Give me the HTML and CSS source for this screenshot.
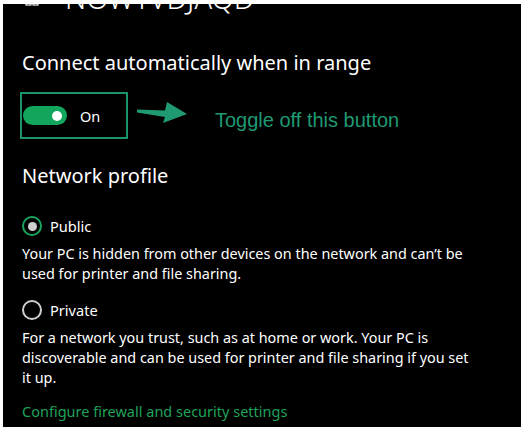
FILE: index.html
```html
<!DOCTYPE html>
<html>
<head>
<meta charset="utf-8">
<link rel="stylesheet" href="styles.css">
</head>
<body>
<div class="panel">
  <div class="header">
    <svg class="net-icon" width="14" height="12" viewBox="0 0 14 12"><rect x="1" y="1" width="5" height="5" fill="none" stroke="#fff" stroke-width="1.2"/><rect x="8" y="1" width="5" height="5" fill="none" stroke="#fff" stroke-width="1.2"/></svg>
    <span class="title">NOWTVDJAQD</span>
  </div>
  <h2 class="section-title first">Connect automatically when in range</h2>
  <div class="toggle-row">
    <div class="toggle-box">
      <span class="switch"><span class="knob"></span></span>
      <span class="switch-label">On</span>
    </div>
    <svg class="arrow" width="52" height="24" viewBox="0 0 52 24"><path d="M0 7.5 L28 8.5 L30 0 L50 12 L26 21 L28 15 L0 10.5 Z" fill="#1f9a72"/></svg>
    <span class="note">Toggle off this button</span>
  </div>
  <h2 class="section-title second">Network profile</h2>
  <div class="option first-option">
    <span class="radio checked"></span><span class="option-label">Public</span>
  </div>
  <p class="desc">Your PC is hidden from other devices on the network and can’t be used for printer and file sharing.</p>
  <div class="option">
    <span class="radio"></span><span class="option-label">Private</span>
  </div>
  <p class="desc">For a network you trust, such as at home or work. Your PC is discoverable and can be used for printer and file sharing if you set it up.</p>
  <a class="link" href="#">Configure firewall and security settings</a>
</div>
</body>
</html>
```

FILE: styles.css
```css
html, body {
  margin: 0;
  padding: 0;
  background: #fff;
}
.panel {
  margin: 4px 0 0 3px;
  height: 423px;
  background: #000;
  color: #fff;
  overflow: hidden;
  padding-left: 19px;
  font-family: "Noto Sans", "Open Sans", sans-serif;
  box-sizing: border-box;
}
.header {
  display: flex;
  align-items: flex-end;
  gap: 26px;
  height: 6px;
  overflow: visible;
}
.net-icon {
  margin-left: 3px;
  margin-bottom: -1px;
  flex: none;
}
.title {
  font-size: 29px;
  font-weight: 300;
  line-height: 30px;
  margin-bottom: -3px;
}
.section-title {
  margin: 0;
  font-weight: 400;
  font-size: 20px;
  line-height: 26px;
}
.section-title.first {
  margin-top: 40px;
}
.toggle-row {
  display: flex;
  align-items: center;
  margin-left: -2px;
  margin-top: 16px;
}
.toggle-box {
  width: 108px;
  height: 47px;
  box-sizing: border-box;
  border: 2px solid #1b9467;
  display: flex;
  align-items: center;
  padding-left: 1px;
}
.switch {
  width: 44px;
  height: 19px;
  border-radius: 10px;
  background: #12a55b;
  position: relative;
  flex: none;
}
.knob {
  position: absolute;
  right: 5px;
  top: 4.5px;
  width: 10px;
  height: 10px;
  border-radius: 50%;
  background: #fff;
}
.switch-label {
  margin-left: 13px;
  font-size: 14.5px;
}
.arrow {
  margin-left: 9px;
  margin-top: -4px;
}
.note {
  margin-left: 26px;
  font-family: "Liberation Sans", Arial, sans-serif;
  font-size: 20px;
  color: #1f9a72;
  margin-top: 10px;
}
.section-title.second {
  margin-top: 24px;
}
.option {
  display: flex;
  align-items: center;
  height: 20px;
  margin-top: 17px;
}
.option.first-option {
  margin-top: 27px;
}
.radio {
  width: 20px;
  height: 20px;
  box-sizing: border-box;
  border: 2px solid #cfcfcf;
  border-radius: 50%;
  display: flex;
  align-items: center;
  justify-content: center;
  flex: none;
}
.radio.checked {
  border-color: #1aa35e;
}
.radio.checked::after {
  content: "";
  width: 9px;
  height: 9px;
  border-radius: 50%;
  background: #cfcfcf;
}
.option-label {
  margin-left: 8px;
  font-size: 14.6px;
}
.desc {
  margin: 8px 0 0;
  font-size: 14.4px;
  line-height: 19.7px;
  width: 455px;
}
.link {
  display: block;
  margin-top: 13px;
  color: #1fa35b;
  text-decoration: none;
  font-size: 14.5px;
}
```
